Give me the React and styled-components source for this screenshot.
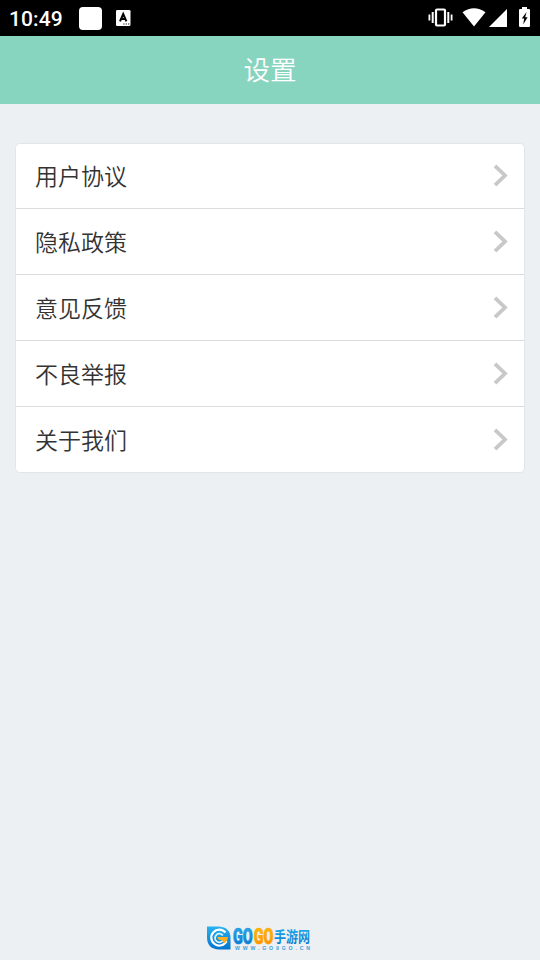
import React from 'react';
import styled, {createGlobalStyle} from 'styled-components';

const GlobalStyle = createGlobalStyle`
    * {
        box-sizing: border-box;
    }

    body {
        margin: 0;
        background: #ecf0f3;
        font-family: "Noto Sans CJK SC", sans-serif;
        font-weight: 350;
    }
`

// Styled Components

const Screen = styled.div`
    width: 100%;
    height: 100vh;
    display: flex;
    flex-direction: column;
    background: #ecf0f3;
    overflow: hidden;
`

const StatusBar = styled.div`
    height: 36px;
    flex: none;
    display: flex;
    justify-content: space-between;
    background: #000;
    color: #fff;
`

const StatusGroup = styled.div`
    display: flex;
    align-items: center;
`

const Clock = styled.span`
    width: 69px;
    padding: 2px 0 0 9px;
    font: 500 21px/24px Roboto, sans-serif;
    letter-spacing: 0.1px;
    white-space: nowrap;
`

const AppSquare = styled.span`
    width: 23px;
    height: 23px;
    margin: 1px 13px 0 10px;
    border-radius: 4px;
    background: #fff;
`

const Header = styled.header`
    height: 68px;
    flex: none;
    display: flex;
    align-items: center;
    justify-content: center;
    background: #87d4bf;
`

const Title = styled.h1`
    margin: 0;
    padding-bottom: 2px;
    color: #fff;
    font-size: 26.6px;
    font-weight: 350;
    line-height: 66px;
`

const List = styled.ul`
    margin: 39px 15px 0;
    padding: 0;
    list-style: none;
    border: 1px solid #e3e6e8;
    border-radius: 5px;
    background: #fff;
    overflow: hidden;
`

const Row = styled.li`
    height: 66px;
    padding: 0 16px 0 19px;
    display: flex;
    align-items: center;
    justify-content: space-between;
    border-top: 1px solid #dcdcdc;
    color: #333;
    font-size: 23px;
    line-height: 63px;

    &:first-child {
        height: 64px;
        padding-bottom: 1px;
        border-top: none;
    }
`

const Footer = styled.footer`
    margin-top: auto;
    height: 36px;
    padding-left: 205px;
`

const Logo = styled.svg`
    display: block;
    overflow: visible;
`

// Components

const Chevron = () => (
    <svg width="15" height="23" viewBox="0 0 15 23">
        <path d="M2 1.8L12 11.5L2 21.2" fill="none" stroke="#c8c8c8" strokeWidth="3.8"/>
    </svg>
)

const KeyboardIcon = () => (
    <svg width="16" height="18" viewBox="0 0 16 18">
        <rect x="1" y="1" width="14.5" height="16" rx="1.2" fill="#fff"/>
        <path d="M5 12.4L8.2 5L11.4 12.4M6.2 10H10.2" fill="none" stroke="#000" strokeWidth="2"/>
        <path d="M8.3 15H9.5M10.7 15H11.9M13.1 15H14.3" stroke="#000" strokeWidth="1.2"/>
    </svg>
)

const SystemIcons = () => (
    <svg width="112" height="36" viewBox="428 0 112 36">
        <rect x="436" y="9.5" width="9" height="16" rx="1" fill="none" stroke="#fff" strokeWidth="2.2"/>
        <path d="M432.7 12V23M448.3 12V23" stroke="#fff" strokeWidth="2"/>
        <path d="M429.4 14.5V20.5M451.6 14.5V20.5" stroke="#fff" strokeWidth="1.8"/>
        <path d="M462.5 12.2Q474 4.3 485.5 12.2L474 26.5Z" fill="#fff"/>
        <path d="M507 9V27H489Z" fill="#fff"/>
        <path d="M522 7H527V9H529Q530 9 530 10V26Q530 27 529 27H520Q519 27 519 26V10Q519 9 520 9H522Z" fill="#fff"/>
        <path d="M526.5 12L521.8 18.6H524.2L523.2 24.4L527.6 17.2H525.2Z" fill="#000"/>
    </svg>
)

const GogoLogo = () => (
    <Logo width="110" height="36" viewBox="205 924 110 36">
        <defs>
            <linearGradient id="blue" x1="0" y1="0" x2="0" y2="1">
                <stop offset="0" stopColor="#28b3ee"/>
                <stop offset="1" stopColor="#0574cc"/>
            </linearGradient>
            <linearGradient id="orange" x1="0" y1="0" x2="0" y2="1">
                <stop offset="0" stopColor="#ffc000"/>
                <stop offset="1" stopColor="#ff8a00"/>
            </linearGradient>
        </defs>
        <path d="M207 926.5H219Q230.5 927.5 230.5 938V949.5H219Q207.5 949 207 938Z" fill="url(#blue)"/>
        <path d="M225.5 932.5A8 8 0 1 0 226.5 941" fill="none" stroke="#fff" strokeWidth="2.2"/>
        <path d="M222.8 935.5A4.3 4.3 0 1 0 222.8 940.5" fill="none" stroke="#d9f4ff" strokeWidth="1.8"/>
        <path d="M217 937H228Q227.5 941 224 943.5L222 940H219Z" fill="#ffad22"/>
        <g fontFamily="Roboto, sans-serif" fontWeight="900" fontSize="21.5" strokeWidth="0.7">
            <text x="233" y="943.8" textLength="19.8" lengthAdjust="spacingAndGlyphs" fill="url(#blue)" stroke="#1688d8">GO</text>
            <text x="253.7" y="943.8" textLength="19.6" lengthAdjust="spacingAndGlyphs" fill="url(#orange)" stroke="#ffa000">GO</text>
        </g>
        <text x="274" y="942.2" textLength="36" lengthAdjust="spacingAndGlyphs" fill="url(#blue)"
              fontFamily="Noto Sans CJK SC, sans-serif" fontWeight="700" fontSize="15">手游网</text>
        <text x="235" y="949.6" textLength="75" fill="#3ba0dc"
              fontFamily="Liberation Sans, sans-serif" fontWeight="700" fontSize="5.2">WWW.GO9GO.CN</text>
    </Logo>
)

const items = ['用户协议', '隐私政策', '意见反馈', '不良举报', '关于我们'];

const App = () => {
    return (
        <Screen>
            <GlobalStyle/>
            <StatusBar>
                <StatusGroup>
                    <Clock>10:49</Clock>
                    <AppSquare/>
                    <KeyboardIcon/>
                </StatusGroup>
                <SystemIcons/>
            </StatusBar>
            <Header>
                <Title>设置</Title>
            </Header>
            <List>
                {items.map(item => (
                    <Row key={item}>
                        <span>{item}</span>
                        <Chevron/>
                    </Row>
                ))}
            </List>
            <Footer>
                <GogoLogo/>
            </Footer>
        </Screen>
    )
}

export default App;
